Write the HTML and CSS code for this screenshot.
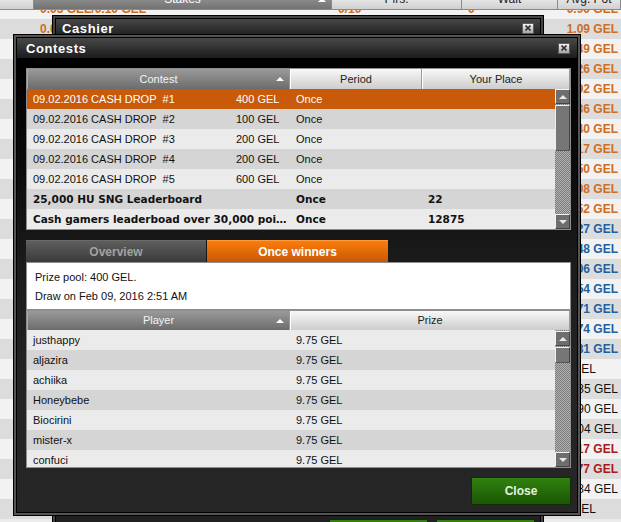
FILE: index.html
```html
<!DOCTYPE html>
<html>
	<head>
		<link rel="stylesheet" href="styles.css">
	</head>
	<body>
		<div class="lobby">
			<div class="lobby-head">
				<div class="lh"></div>
				<div class="lh sorted">Stakes<span class="sort-arrow"></span></div>
				<div class="lh">Plrs.</div>
				<div class="lh">Wait</div>
				<div class="lh">Avg. Pot</div>
			</div>
			<div class="lobby-body">
				<div class="lobby-rows">
					<div class="lrow o"><span></span><span>0.05 GEL/0.10 GEL</span><span>0/10</span><span>0</span><span class="pot">0.90 GEL</span></div>
					<div class="lrow o"><span></span><span>0.05 GEL/0.10 GEL</span><span>3/6</span><span>0</span><span class="pot">1.09 GEL</span></div>
					<div class="lrow o"><span></span><span>0.10 GEL/0.20 GEL</span><span>5/10</span><span>0</span><span class="pot">1.49 GEL</span></div>
					<div class="lrow o"><span></span><span>0.10 GEL/0.20 GEL</span><span>4/6</span><span>0</span><span class="pot">1.26 GEL</span></div>
					<div class="lrow o"><span></span><span>0.10 GEL/0.20 GEL</span><span>2/6</span><span>0</span><span class="pot">0.92 GEL</span></div>
					<div class="lrow o"><span></span><span>0.25 GEL/0.50 GEL</span><span>6/10</span><span>0</span><span class="pot">2.36 GEL</span></div>
					<div class="lrow o"><span></span><span>0.25 GEL/0.50 GEL</span><span>3/6</span><span>0</span><span class="pot">1.40 GEL</span></div>
					<div class="lrow o"><span></span><span>0.25 GEL/0.50 GEL</span><span>5/6</span><span>0</span><span class="pot">3.17 GEL</span></div>
					<div class="lrow o"><span></span><span>0.50 GEL/1 GEL</span><span>4/10</span><span>0</span><span class="pot">2.50 GEL</span></div>
					<div class="lrow o"><span></span><span>0.50 GEL/1 GEL</span><span>6/6</span><span>1</span><span class="pot">4.08 GEL</span></div>
					<div class="lrow o"><span></span><span>0.50 GEL/1 GEL</span><span>5/10</span><span>0</span><span class="pot">3.52 GEL</span></div>
					<div class="lrow b"><span></span><span>1 GEL/2 GEL</span><span>4/6</span><span>0</span><span class="pot">5.27 GEL</span></div>
					<div class="lrow b"><span></span><span>1 GEL/2 GEL</span><span>6/6</span><span>2</span><span class="pot">10.48 GEL</span></div>
					<div class="lrow b"><span></span><span>1 GEL/2 GEL</span><span>5/10</span><span>0</span><span class="pot">8.06 GEL</span></div>
					<div class="lrow b"><span></span><span>2 GEL/4 GEL</span><span>6/10</span><span>0</span><span class="pot">12.54 GEL</span></div>
					<div class="lrow b"><span></span><span>2 GEL/4 GEL</span><span>5/6</span><span>0</span><span class="pot">16.71 GEL</span></div>
					<div class="lrow b"><span></span><span>5 GEL/10 GEL</span><span>4/6</span><span>0</span><span class="pot">20.74 GEL</span></div>
					<div class="lrow b"><span></span><span>5 GEL/10 GEL</span><span>6/6</span><span>1</span><span class="pot">23.81 GEL</span></div>
					<div class="lrow n"><span></span><span>0.02 GEL/0.04 GEL</span><span>0/6</span><span>0</span><span class="pot left">0 GEL</span></div>
					<div class="lrow n"><span></span><span>0.02 GEL/0.04 GEL</span><span>2/10</span><span>0</span><span class="pot">0.35 GEL</span></div>
					<div class="lrow n"><span></span><span>0.05 GEL/0.10 GEL</span><span>2/6</span><span>0</span><span class="pot">0.90 GEL</span></div>
					<div class="lrow n"><span></span><span>0.05 GEL/0.10 GEL</span><span>3/10</span><span>0</span><span class="pot">1.04 GEL</span></div>
					<div class="lrow r"><span></span><span>10 GEL/20 GEL</span><span>5/6</span><span>0</span><span class="pot">46.17 GEL</span></div>
					<div class="lrow r"><span></span><span>10 GEL/20 GEL</span><span>6/6</span><span>3</span><span class="pot">52.77 GEL</span></div>
					<div class="lrow n"><span></span><span>0.10 GEL/0.20 GEL</span><span>2/6</span><span>0</span><span class="pot">0.84 GEL</span></div>
					<div class="lrow n"><span></span><span>0.10 GEL/0.20 GEL</span><span>0/10</span><span>0</span><span class="pot left">0 GEL</span></div>
				</div>
			</div>
		</div>

		<div class="window cashier">
			<div class="window-inner">
				<div class="titlebar">
					<span>Cashier</span>
					<div class="x-btn"><svg width="6" height="6" viewBox="0 0 6 6"><path d="M0.5 0.5L5.5 5.5M5.5 0.5L0.5 5.5" stroke="#333" stroke-width="1.6"/></svg></div>
				</div>
				<div class="cashier-body">
					<div class="green-btn"></div>
					<div class="green-btn"></div>
				</div>
			</div>
		</div>

		<div class="window contests">
			<div class="window-inner">
				<div class="titlebar">
					<span>Contests</span>
					<div class="x-btn"><svg width="6" height="6" viewBox="0 0 6 6"><path d="M0.5 0.5L5.5 5.5M5.5 0.5L0.5 5.5" stroke="#333" stroke-width="1.6"/></svg></div>
				</div>
				<div class="contests-body">
					<div class="grid contest-grid">
						<div class="grid-head">
							<div class="gh sorted">Contest<span class="sort-arrow"></span></div>
							<div class="gh">Period</div>
							<div class="gh">Your Place</div>
						</div>
						<div class="grid-body">
							<div class="rows">
								<div class="row sel"><div class="c-contest"><span class="c-name">09.02.2016 CASH DROP&nbsp; #1</span><span>400 GEL</span></div><div class="cell">Once</div><div class="cell"></div></div>
								<div class="row"><div class="c-contest"><span class="c-name">09.02.2016 CASH DROP&nbsp; #2</span><span>100 GEL</span></div><div class="cell">Once</div><div class="cell"></div></div>
								<div class="row"><div class="c-contest"><span class="c-name">09.02.2016 CASH DROP&nbsp; #3</span><span>200 GEL</span></div><div class="cell">Once</div><div class="cell"></div></div>
								<div class="row"><div class="c-contest"><span class="c-name">09.02.2016 CASH DROP&nbsp; #4</span><span>200 GEL</span></div><div class="cell">Once</div><div class="cell"></div></div>
								<div class="row"><div class="c-contest"><span class="c-name">09.02.2016 CASH DROP&nbsp; #5</span><span>600 GEL</span></div><div class="cell">Once</div><div class="cell"></div></div>
								<div class="row bold"><div class="c-contest"><span class="c-name wide">25,000 HU SNG Leaderboard</span></div><div class="cell">Once</div><div class="cell">22</div></div>
								<div class="row bold"><div class="c-contest"><span class="c-name wide">Cash gamers leaderboad over 30,000 points</span></div><div class="cell">Once</div><div class="cell">12875</div></div>
							</div>
							<div class="scrollbar">
								<div class="sb-btn up"></div>
								<div class="sb-thumb"></div>
								<div class="sb-track"></div>
								<div class="sb-btn down"></div>
							</div>
						</div>
					</div>

					<div class="tabs">
						<div class="tab">Overview</div>
						<div class="tab active">Once winners</div>
					</div>

					<div class="info">
						<div>Prize pool: 400 GEL.</div>
						<div>Draw on Feb 09, 2016 2:51 AM</div>
					</div>

					<div class="grid winners-grid">
						<div class="grid-head">
							<div class="gh sorted">Player<span class="sort-arrow"></span></div>
							<div class="gh">Prize</div>
						</div>
						<div class="grid-body">
							<div class="rows">
								<div class="row"><div class="cell">justhappy</div><div class="cell">9.75 GEL</div></div>
								<div class="row"><div class="cell">aljazira</div><div class="cell">9.75 GEL</div></div>
								<div class="row"><div class="cell">achiika</div><div class="cell">9.75 GEL</div></div>
								<div class="row"><div class="cell">Honeybebe</div><div class="cell">9.75 GEL</div></div>
								<div class="row"><div class="cell">Biocirini</div><div class="cell">9.75 GEL</div></div>
								<div class="row"><div class="cell">mister-x</div><div class="cell">9.75 GEL</div></div>
								<div class="row"><div class="cell">confuci</div><div class="cell">9.75 GEL</div></div>
								<div class="row"><div class="cell">nugzari</div><div class="cell">9.75 GEL</div></div>
							</div>
							<div class="scrollbar">
								<div class="sb-btn up"></div>
								<div class="sb-thumb"></div>
								<div class="sb-track"></div>
								<div class="sb-btn down"></div>
							</div>
						</div>
					</div>

					<div class="footer">
						<div class="green-btn close-btn">Close</div>
					</div>
				</div>
			</div>
		</div>
	</body>
</html>
```

FILE: styles.css
```css
* {
	box-sizing: border-box;
}
body {
	margin: 0;
	width: 621px;
	height: 522px;
	overflow: hidden;
	position: relative;
	background: #ebebeb;
	font-family: "Liberation Sans", Arial, sans-serif;
	font-size: 11px;
	color: #111;
}

/* lobby list behind the windows, scrolled a little */
.lobby {
	margin-top: -10px;
}
.lobby-head, .lrow {
	display: grid;
	grid-template-columns: 34px 298px 130px 96px 63px;
}
.lobby-head {
	height: 20px;
	border-bottom: 1px solid #8a8a8a;
}
.lh {
	background: linear-gradient(#fbfbfb, #d0d0d0);
	border-right: 1px solid #8a8a8a;
	color: #222;
	font-size: 12px;
	line-height: 19px;
	text-align: center;
}
.lh.sorted {
	position: relative;
	background: linear-gradient(#a4a4a4, #727272);
	color: #fff;
}
.lobby-body {
	height: 523px;
	overflow: hidden;
}
.lobby-rows {
	margin-top: -11px;
}
.lrow {
	height: 20px;
	line-height: 20px;
	font-size: 12px;
	font-weight: bold;
	white-space: nowrap;
	background: #f2f2f2;
}
.lrow:nth-child(even) {
	background: #dcdcdc;
}
.lrow span {
	padding-left: 6px;
	overflow: hidden;
}
.lrow .pot {
	text-align: right;
	padding: 0 3px 0 0;
	overflow: visible;
}
.lrow .pot.left {
	text-align: left;
	padding-left: 4px;
}
.lrow.o { color: #cf6d1c; }
.lrow.b { color: #1f5f9e; }
.lrow.r { color: #a81a1a; }
.lrow.n {
	color: #111;
	font-weight: normal;
}

.sort-arrow {
	position: absolute;
	right: 5px;
	top: 8px;
	border-left: 4px solid transparent;
	border-right: 4px solid transparent;
	border-bottom: 4px solid #fff;
}

/* windows */
.window {
	position: absolute;
	display: flex;
	border: 1px solid #000;
	padding: 2px;
	background: #555;
}
.window-inner {
	flex: 1;
	min-width: 0;
	display: flex;
	flex-direction: column;
	border: 1px solid #000;
}
.cashier {
	left: 52px;
	top: 15px;
	width: 492px;
	height: 560px;
	background: #444;
}
.contests {
	left: 13px;
	top: 34px;
	width: 568px;
	height: 482px;
}
.titlebar {
	flex: none;
	display: flex;
	align-items: center;
	justify-content: space-between;
	height: 20px;
	padding: 0 7px 0 9px;
	background: linear-gradient(#484848, #1c1c1c);
	color: #fff;
	font-size: 13px;
	font-weight: bold;
	letter-spacing: 0.6px;
}
.cashier .titlebar {
	height: 18px;
	padding: 0 6px 0 6px;
}
.x-btn {
	width: 12px;
	height: 11px;
	display: flex;
	align-items: center;
	justify-content: center;
	border: 1px solid #5c5c5c;
	background: linear-gradient(#f4f4f4, #a4a4a4);
}
.x-btn svg {
	display: block;
}
.cashier-body {
	flex: 1;
	display: flex;
	justify-content: flex-end;
	align-items: flex-start;
	gap: 8px;
	padding: 482px 5px 0 0;
	background: #202020;
}
.cashier-body .green-btn {
	width: 99px;
}

.contests-body {
	flex: 1;
	padding: 10px 6px 0 9px;
	background: linear-gradient(#000 0, #0c0c0c 25%, #1b1b1b 45%, #242424 70%, #262626);
}

/* tables */
.grid {
	border: 1px solid #8e8e8e;
	background: #ebebeb;
}
.grid-head {
	display: grid;
	height: 20px;
}
.contest-grid .grid-head {
	grid-template-columns: 263px 132px 148px;
}
.winners-grid .grid-head {
	grid-template-columns: 263px 280px;
	height: 19px;
}
.gh {
	background: linear-gradient(#f8f8f8, #cdcdcd);
	border-left: 1px solid #fff;
	border-right: 1px solid #9a9a9a;
	color: #222;
	text-align: center;
	line-height: 20px;
}
.winners-grid .gh {
	line-height: 19px;
}
.gh.sorted {
	position: relative;
	background: linear-gradient(#9a9a9a, #6c6c6c);
	border-left-color: #aaa;
	color: #f4f4f4;
}
.grid-body {
	display: flex;
}
.winners-grid .grid-body {
	height: 137px;
	overflow: hidden;
}
.rows {
	flex: 1;
}
.row {
	display: grid;
	height: 20px;
	line-height: 20px;
	white-space: nowrap;
	background: #ebebeb;
}
.row:nth-child(even) {
	background: #d5d5d5;
}
.contest-grid .row {
	grid-template-columns: 263px 132px 133px;
}
.winners-grid .row {
	grid-template-columns: 263px 265px;
}
.row.sel {
	background: #c85a0a;
	color: #fff;
}
.row.bold {
	font-family: "DejaVu Sans", sans-serif;
	font-weight: bold;
	font-size: 10.5px;
}
.cell {
	padding-left: 6px;
	overflow: hidden;
}
.c-contest {
	display: flex;
	min-width: 0;
}
.c-name {
	width: 209px;
	padding-left: 6px;
	flex: none;
}
.c-name.wide {
	flex: 1;
	width: auto;
	overflow: hidden;
	text-overflow: ellipsis;
}

.scrollbar {
	flex: none;
	width: 15px;
	display: flex;
	flex-direction: column;
	background: repeating-conic-gradient(#7c7c7c 0 25%, #b2b2b2 0 50%) 0 0 / 2px 2px;
}
.winners-grid .scrollbar {
	padding-top: 1px;
}
.sb-btn {
	flex: none;
	height: 15px;
	display: flex;
	align-items: center;
	justify-content: center;
	background: #6e6e6e;
	border-top: 1px solid #f2f2f2;
	border-left: 1px solid #f2f2f2;
	border-right: 1px solid #444;
	border-bottom: 1px solid #444;
}
.sb-btn::after {
	content: "";
	border-left: 4px solid transparent;
	border-right: 4px solid transparent;
}
.sb-btn.up::after {
	border-bottom: 4px solid #e8e8e8;
}
.sb-btn.down::after {
	border-top: 4px solid #e8e8e8;
}
.sb-thumb {
	flex: none;
	height: 46px;
	margin-top: 1px;
	background: #767676;
	border-top: 1px solid #eee;
	border-left: 1px solid #eee;
	border-right: 1px solid #444;
	border-bottom: 1px solid #555;
}
.winners-grid .sb-thumb {
	height: 16px;
}
.sb-track {
	flex: 1;
}

/* tabs */
.tabs {
	display: flex;
	gap: 1px;
	margin-top: 10px;
}
.tab {
	width: 180px;
	height: 22px;
	line-height: 22px;
	text-align: center;
	font-size: 12px;
	font-weight: bold;
	color: #a2a2a2;
	background: linear-gradient(#5e5e5e, #3a3a3a);
	border-top: 1px solid #6a6a6a;
}
.tab.active {
	width: 181px;
	color: #fff;
	background: linear-gradient(#fa7d0c, #c75804);
	border-top-color: #ff9a3a;
}

.info {
	height: 48px;
	padding: 5px 8px 3px;
	line-height: 19px;
	background: #fff;
	border: 1px solid #8e8e8e;
}

.footer {
	display: flex;
	justify-content: flex-end;
	padding-top: 9px;
}
.green-btn {
	width: 100px;
	height: 28px;
	display: flex;
	align-items: center;
	justify-content: center;
	border: 1px solid #0f2c05;
	background: linear-gradient(#308210, #256c0a 50%, #1b5506);
	color: #e6f2de;
	font-size: 12px;
	font-weight: bold;
}
```
